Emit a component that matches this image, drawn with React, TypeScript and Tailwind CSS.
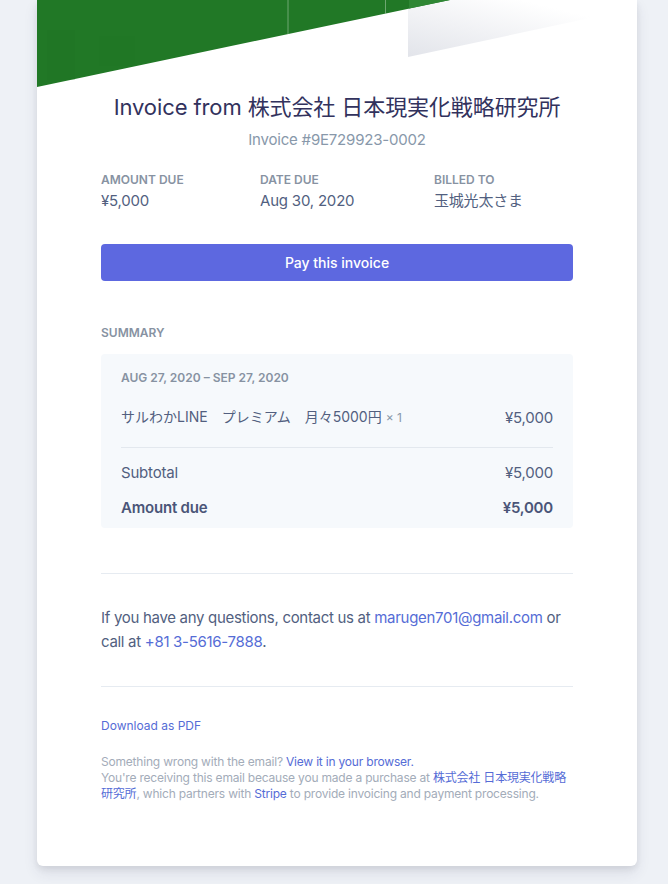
const font = "font-['Inter','Noto_Sans_CJK_JP',sans-serif]";

function HeaderArt() {
  return (
    <svg width="600" height="88" viewBox="0 0 600 88" className="block">
      <defs>
        <linearGradient id="fade" x1="0" y1="1" x2="1" y2="0">
          <stop offset="0" stopColor="#e2e4ea" />
          <stop offset="0.75" stopColor="#ffffff" />
        </linearGradient>
      </defs>
      <polygon points="371,0 600,0 600,8 371,57" fill="url(#fade)" />
      <polygon points="0,0 413,0 0,87" fill="#217826" />
      <polygon points="372,0 413,0 372,8.6" fill="#2f8734" />
      <rect x="10" y="30" width="28" height="50" fill="#1d7022" opacity="0.18" />
      <rect x="62" y="36" width="36" height="30" fill="#1d7022" opacity="0.14" />
      <line x1="251" y1="0" x2="251" y2="34" stroke="#ffffff" strokeOpacity="0.35" strokeWidth="1" />
      <line x1="348.5" y1="0" x2="348.5" y2="13.5" stroke="#ffffff" strokeOpacity="0.35" strokeWidth="1" />
    </svg>
  );
}

function Meta({ label, value, width }: { label: string; value: string; width: string }) {
  return (
    <div className={width}>
      <div className="text-[12px] leading-[16px] font-semibold uppercase text-[#8792a2]">{label}</div>
      <div className="mt-[1px] text-[15px] leading-[24px] tracking-[-0.2px] text-[#525f7f]">{value}</div>
    </div>
  );
}

export default function App() {
  return (
    <div className={`min-h-[884px] bg-[#eef1f6] ${font}`}>
      <div className="ml-[37px] w-[600px] rounded-b-[6px] bg-white pb-[64px] shadow-[0_7px_14px_rgba(50,50,93,0.1),0_3px_6px_rgba(0,0,0,0.07)]">
        <HeaderArt />
        <div className="px-[64px]">
          <h1 className="mt-[3px] text-center text-[22px] leading-[32px] font-normal tracking-[-0.1px] text-[#32325d]">
            Invoice from 株式会社 日本現実化戦略研究所
          </h1>
          <div className="mt-[5px] text-center text-[15px] leading-[24px] tracking-[-0.2px] text-[#8898aa]">
            Invoice #9E729923-0002
          </div>

          <div className="mt-[20px] flex">
            <Meta label="Amount due" value="¥5,000" width="w-[159px]" />
            <Meta label="Date due" value="Aug 30, 2020" width="w-[174px]" />
            <Meta label="Billed to" value="玉城光太さま" width="flex-1" />
          </div>

          <button
            type="button"
            className="mt-[31px] flex h-[37px] w-full items-center justify-center rounded-[4px] bg-[#5d68e0] text-[14px] font-medium text-white"
          >
            Pay this invoice
          </button>

          <div className="mt-[44px] text-[12px] leading-[16px] font-semibold uppercase text-[#8792a2]">
            Summary
          </div>

          <div className="mt-[13px] h-[174px] rounded-[4px] bg-[#f6f9fc] px-[20px] pt-[16px]">
            <div className="text-[12px] leading-[16px] font-semibold uppercase text-[#8792a2]">
              Aug 27, 2020 – Sep 27, 2020
            </div>
            <div className="mt-[19px] flex items-center justify-between text-[15px] leading-[24px] text-[#525f7f]">
              <span className="text-[14px]">
                サルわかLINE　プレミアム　月々5000円
                <span className="ml-[4px] text-[12px] text-[#8898aa]">× 1</span>
              </span>
              <span className="tracking-[-0.2px]">¥5,000</span>
            </div>
            <div className="mt-[17px] h-px bg-[#e3e8ee]" />
            <div className="mt-[13px] flex justify-between text-[15px] leading-[24px] tracking-[-0.2px] text-[#525f7f]">
              <span>Subtotal</span>
              <span>¥5,000</span>
            </div>
            <div className="mt-[11px] flex justify-between text-[15px] leading-[24px] font-semibold tracking-[-0.2px] text-[#4a5578]">
              <span>Amount due</span>
              <span>¥5,000</span>
            </div>
          </div>

          <div className="mt-[45px] h-px bg-[#e6ebf1]" />

          <p className="mt-[32px] text-[15px] leading-[24px] tracking-[-0.3px] text-[#525f7f]">
            If you have any questions, contact us at{" "}
            <a className="text-[#556cd6]">marugen701@gmail.com</a> or call at{" "}
            <a className="text-[#556cd6]">+81 3-5616-7888</a>.
          </p>

          <div className="mt-[32px] h-px bg-[#e6ebf1]" />

          <div className="mt-[31px] text-[12px] leading-[16px] text-[#556cd6]">Download as PDF</div>

          <div className="mt-[20px] text-[12px] leading-[16px] tracking-[-0.2px] text-[#a3acb9]">
            <div>
              Something wrong with the email? <a className="text-[#556cd6]">View it in your browser.</a>
            </div>
            <div>
              You're receiving this email because you made a purchase at{" "}
              <a className="text-[#556cd6]">株式会社 日本現実化戦略研究所</a>, which partners with{" "}
              <a className="text-[#556cd6]">Stripe</a> to provide invoicing and payment processing.
            </div>
          </div>
        </div>
      </div>
    </div>
  );
}
